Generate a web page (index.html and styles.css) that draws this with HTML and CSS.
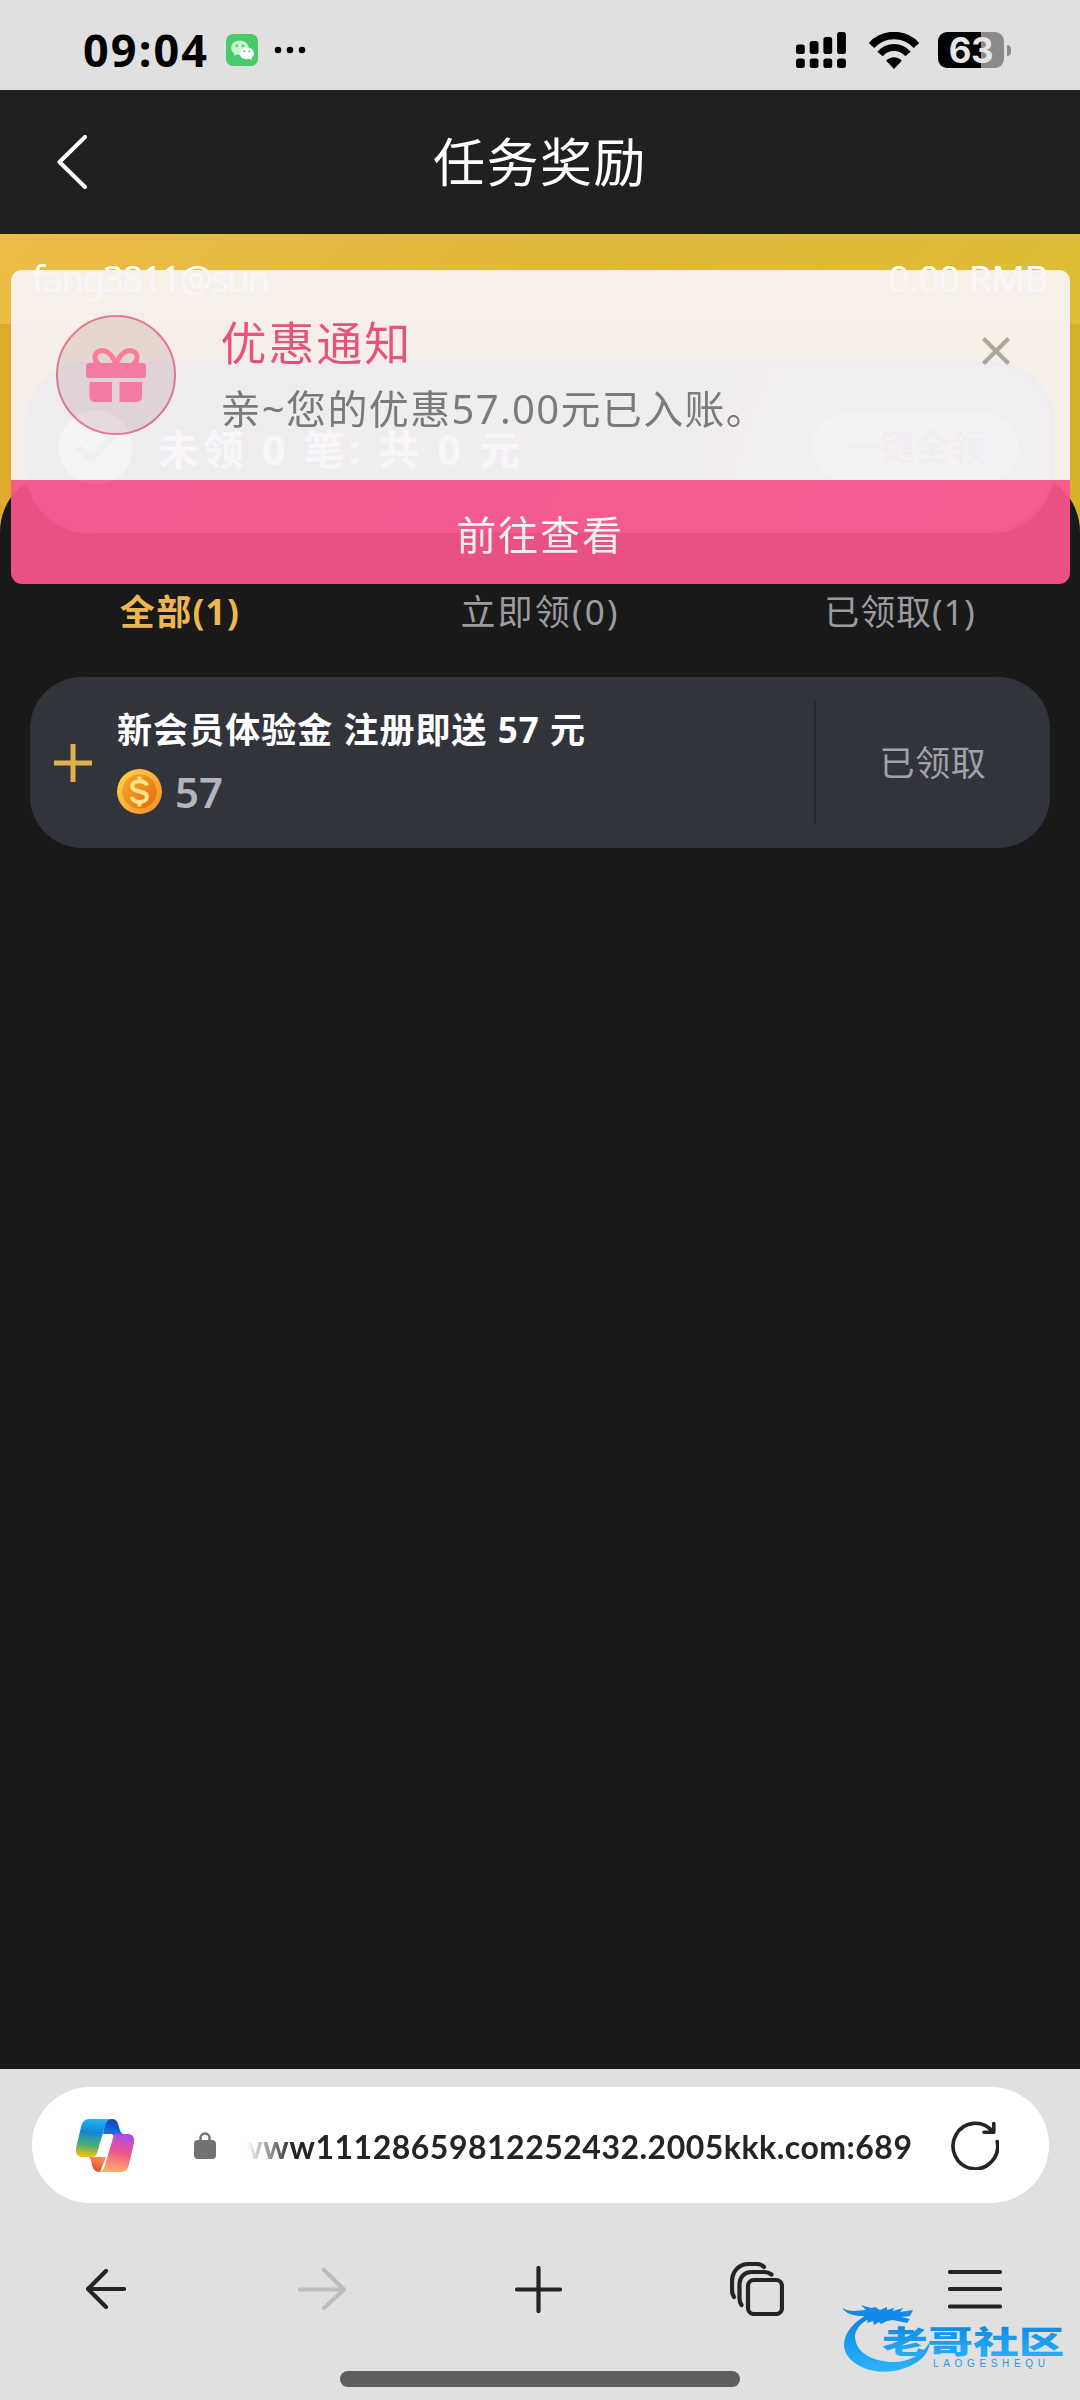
FILE: index.html
```html
<!DOCTYPE html>
<html lang="zh-CN">
<head>
<meta charset="utf-8">
<title>任务奖励</title>
<link rel="stylesheet" href="styles.css">
</head>
<body>
<div class="screen">
  <div class="status">
    <span class="clock">09:04</span>
    <svg class="wechat" width="32" height="32" viewBox="0 0 32 32">
      <rect width="32" height="32" rx="7" fill="#4acb6b"/>
      <path d="M14 6.500c-5 0-8.800 3.200-8.800 7.400 0 2.300 1.200 4.300 3.100 5.600L7.600 22l3.200-1.500c1 .3 2.100.5 3.200.5 4.800 0 8.600-3 8.600-7.100S18.800 6.500 14 6.500z" fill="#c6f5d2"/>
      <circle cx="10.800" cy="11.800" r="1.300" fill="#4acb6b"/><circle cx="17" cy="11.800" r="1.300" fill="#4acb6b"/>
      <path d="M20.800 13.500c-4 0-7.100 2.600-7.100 5.900s3.100 5.800 7.100 5.800c.9 0 1.800-.1 2.600-.4l2.600 1.200-.6-2.100c1.600-1.100 2.500-2.700 2.500-4.500 0-3.300-3.100-5.900-7.100-5.900z" fill="#fff"/>
      <circle cx="18.400" cy="17.300" r="1" fill="#4acb6b"/><circle cx="23.300" cy="17.300" r="1" fill="#4acb6b"/>
    </svg>
    <svg class="dots" width="32" height="8" viewBox="0 0 32 8"><circle cx="4" cy="4" r="3.300"/><circle cx="16" cy="4" r="3.300"/><circle cx="28" cy="4" r="3.300"/></svg>
    <svg class="signal" width="50" height="36" viewBox="0 0 50 36">
      <rect x="0" y="12.500" width="8.800" height="9.500" rx="2.500"/><rect x="13.700" y="9" width="8.800" height="13" rx="2.500"/><rect x="27.400" y="5" width="8.800" height="17" rx="2.500"/><rect x="41.100" y="0" width="8.800" height="22" rx="2.500"/>
      <rect x="0" y="26.500" width="8.800" height="9.500" rx="2.500"/><rect x="13.700" y="26.500" width="8.800" height="9.500" rx="2.500"/><rect x="27.400" y="26.500" width="8.800" height="9.500" rx="2.500"/><rect x="41.100" y="26.500" width="8.800" height="9.500" rx="2.500"/>
    </svg>
    <svg class="wifi" width="50" height="37" viewBox="0 0 50 37">
      <path d="M2.500 13.500C14.500.2 35.500.2 47.500 13.500" fill="none" stroke="#000" stroke-width="7.500"/>
      <path d="M11 22c7.500-8.600 20.500-8.600 28 0" fill="none" stroke="#000" stroke-width="7"/>
      <path d="M25 37l-7.800-8.200c4-4.800 11.600-4.800 15.600 0z"/>
    </svg>
    <div class="battery"><span>63</span></div>
    <i class="nub"></i>
  </div>

  <header class="header">
    <svg width="30" height="54" viewBox="0 0 30 54"><path d="M28 2L2.500 27 28 52" fill="none" stroke="#fff" stroke-width="4" stroke-linecap="round" stroke-linejoin="round"/></svg>
    <h1>任务奖励</h1>
  </header>

  <main class="page">
    <div class="user"><span class="name">fang3811@sun</span><span class="balance">0.00 RMB</span></div>
    <section class="summary">
      <svg width="75" height="75" viewBox="0 0 75 75"><circle cx="37.500" cy="37.500" r="37" fill="#e2dfe4"/><path d="M20 37l13 13 23-24" fill="none" stroke="#a8a5b1" stroke-width="7"/></svg>
      <span class="total">未领 0 笔: 共 0 元</span>
      <span class="claim">一键全领</span>
    </section>
    <section class="panel">
      <nav class="tabs"><span class="active">全部(1)</span><span class="wide">立即领(0)</span><span>已领取(1)</span></nav>
      <article class="task">
        <svg class="plus" width="40" height="40" viewBox="0 0 40 40"><path d="M20 1v38M1 20h38" stroke="#dfb04e" stroke-width="5"/></svg>
        <div class="info">
          <h2>新会员体验金 注册即送 57 元</h2>
          <div class="amount">
            <svg width="45" height="45" viewBox="0 0 45 45">
              <defs><linearGradient id="rim" x1="0" y1="0" x2="1" y2="1"><stop offset="0" stop-color="#ffd84d"/><stop offset="1" stop-color="#f88a25"/></linearGradient>
              <linearGradient id="face" x1="0" y1="0" x2="1" y2=".8"><stop offset="0" stop-color="#f8ab28"/><stop offset="1" stop-color="#e27112"/></linearGradient></defs>
              <circle cx="22.500" cy="22.500" r="22.500" fill="url(#rim)"/><circle cx="22.500" cy="22.500" r="17.200" fill="url(#face)"/>
              <path d="M30 16.500c-1-3.200-4-4.300-7.500-4.300-4.200 0-7.300 1.800-7.300 5 0 6.900 14.700 3.600 14.700 10.500 0 3.300-3.200 5.200-7.400 5.200-4.100 0-7.200-1.700-7.800-5M22.500 7.500v6M22.500 32v5.500" fill="none" stroke="#ffe58a" stroke-width="4"/>
            </svg>
            <span>57</span>
          </div>
        </div>
        <span class="state">已领取</span>
      </article>
    </section>

    <aside class="notice">
      <div class="message">
        <div class="badge">
          <svg width="60" height="54" viewBox="0 0 60 54" fill="#ff7aa5">
            <path d="M30 17C27 7 21 2.500 16 2.500c-4.500 0-7 3-7 7 0 3 1.500 5.500 4 7.500M30 17C33 7 39 2.500 44 2.500c4.500 0 7 3 7 7 0 3-1.500 5.500-4 7.500" fill="none" stroke="#ff7aa5" stroke-width="5"/>
            <rect y="15" width="60" height="15" rx="3"/><path d="M3.500 34H26v20H8.500a5 5 0 0 1-5-5zM33.500 34H56v15a5 5 0 0 1-5 5H33.500z"/>
          </svg>
        </div>
        <div class="copy"><h3>优惠通知</h3><p>亲~您的优惠57.00元已入账。</p></div>
        <svg class="close" width="28" height="28" viewBox="0 0 28 28"><path d="M1.500 1.500l25 25M26.500 1.500l-25 25" stroke="#aaa7a5" stroke-width="4.200"/></svg>
      </div>
      <div class="go">前往查看</div>
    </aside>
  </main>

  <footer class="browser">
    <div class="address">
      <svg class="copilot" width="58" height="53" viewBox="0 0 58 53">
        <defs>
          <linearGradient id="cool" x1=".5" y1="0" x2=".4" y2="1"><stop offset="0" stop-color="#23b4f4"/><stop offset=".35" stop-color="#1686d6"/><stop offset=".7" stop-color="#4cae70"/><stop offset="1" stop-color="#f0c414"/></linearGradient>
          <linearGradient id="warm" x1=".6" y1="0" x2=".4" y2="1"><stop offset="0" stop-color="#a64ce8"/><stop offset=".45" stop-color="#f0538c"/><stop offset="1" stop-color="#ffb366"/></linearGradient>
          <linearGradient id="blue" x1=".7" y1="0" x2=".3" y2="1"><stop offset="0" stop-color="#123fb8"/><stop offset="1" stop-color="#1d72e8"/></linearGradient>
          <linearGradient id="red" x1=".7" y1="0" x2=".3" y2="1"><stop offset="0" stop-color="#ff9350"/><stop offset="1" stop-color="#e0432f"/></linearGradient>
        </defs>
        <path d="M30 0h6c4 0 6 3 7 8 1 4 2 6 4 7H27z" fill="url(#blue)"/>
        <path d="M13 38h17l-6 15c-5 0-7-3-8-7-1-4-1-6-3-8z" fill="url(#red)"/>
        <path d="M13 0h23c-4 0-6 3-7 7l-8 27c-1 3-3 4-6 4H6c-5 0-7-4-6-9L5 8c1-5 4-8 8-8z" fill="url(#cool)"/>
        <path d="M45 53H22c4 0 6-3 7-7l8-27c1-3 0-4-4-4h19c5 0 7 4 6 9l-5 21c-1 5-4 8-8 8z" fill="url(#warm)"/>
        <path d="M36 15h-4c-3 0-4 2-5 5l-5 18h4c4 0 5-2 6-5z" fill="#fff"/>
      </svg>
      <svg class="lock" width="22" height="27" viewBox="0 0 22 27"><rect y="8" width="22" height="19" rx="4" fill="#727272"/><path d="M6.500 9V6a4.500 4.500 0 0 1 9 0v3" fill="none" stroke="#727272" stroke-width="2.500"/></svg>
      <span class="url">www11128659812252432.2005kkk.com:689</span>
      <svg class="reload" width="48" height="50" viewBox="0 0 48 50" fill="none" stroke="#242424" stroke-width="3.600" stroke-linecap="round" stroke-linejoin="round"><path d="M46.200 21.500A22.300 22.800 0 1 1 41.500 11.500M33 12.200h9.800V3.500"/></svg>
    </div>
    <nav class="tools">
      <span><svg width="40" height="40" viewBox="0 0 40 40"><path d="M38 20H2M20 2L2 20l18 18"/></svg></span>
      <span class="off"><svg width="48" height="42" viewBox="0 0 48 42"><path d="M2 21.500h44M26 2l20 19.500L26 40"/></svg></span>
      <span><svg width="47" height="47" viewBox="0 0 47 47"><path d="M2 23.500h43M23.500 2v43"/></svg></span>
      <span class="stack"><svg width="54" height="54" viewBox="0 0 54 54"><rect x="18" y="18" width="34" height="34" rx="6"/><path d="M4 35c-1.500-2-2-4-2-7v-8C2 9 9 2 19 2h8c3 0 5 1 7 3M11.500 43c-1.500-2-2-4-2-7V23c0-8 5-13 12-13h13c3 0 5 1 7 2.500"/></svg></span>
      <span class="menu"><svg width="54" height="40" viewBox="0 0 54 40"><path d="M2 3h50M2 20h50M2 37.500h50"/></svg></span>
    </nav>
    <i class="home"></i>
  </footer>

  <svg class="mark" width="224" height="74" viewBox="0 0 224 74">
    <defs><linearGradient id="sea" x1="0" y1="0" x2="0" y2="1"><stop offset="0" stop-color="#0a80e0"/><stop offset="1" stop-color="#2cb4fa"/></linearGradient></defs>
    <path d="M28 10C6 19-3 38 5 51c9 14 33 21 55 14 17-5 27-15 28-27-7 12-20 20-36 20-21 0-38-9-39-25C13 23 24 14 36 12z" fill="url(#sea)"/>
    <path d="M1 4c8 5 15 2 23 2l-5-5 10 3 4-1 5 3 7-3 0 3 7-2-1 3 10-3-3 4 13-2-3 6-9 1 9 2-3 4-14-3-6 1-6 3-2-2-5 3-1-4-6 2 1-5-7 2 3-4c-9 0-16-1-21-7z" fill="#118be9"/>
    <g fill="url(#sea)"><text class="mark-cn" transform="translate(40 49) scale(1.470 1)">老哥社区</text></g>
    <text class="mark-en" x="91" y="63" textLength="112">LAOGESHEQU</text>
  </svg>
</div>
</body>
</html>
```
FILE: styles.css
```css
* { box-sizing: border-box; }
body { margin: 0; font-family: "Noto Sans", "Noto Sans CJK SC", sans-serif; }
h1, h2, h3, p { margin: 0; font-weight: 400; white-space: nowrap; }
svg { display: block; flex: none; }
span { white-space: nowrap; }

.screen { position: relative; width: 1080px; height: 2400px; display: flex; flex-direction: column; background: #191919; overflow: hidden; }

.status { height: 90px; flex: none; display: flex; align-items: center; padding: 10px 69px 0 83px; background: #e0e0e0; }
.clock { width: 127px; margin-right: 16px; font-size: 45px; font-weight: 700; line-height: 60px; letter-spacing: 2.100px; }
.dots { margin-left: 16px; }
.signal { margin-left: auto; }
.wifi { margin: 0 19.500px 0 22.500px; }
.battery { width: 66px; height: 36px; border-radius: 9px; background: linear-gradient(90deg, #000 43px, #8a8a8a 43px); color: #e6e6e6; font: 700 35px/37px Inter, sans-serif; text-align: center; letter-spacing: -0.500px; }
.nub { width: 4px; height: 11px; margin-left: 3px; border-radius: 0 4px 4px 0; background: #8a8a8a; }

.header { height: 144px; flex: none; display: grid; grid-template-columns: 100px 1fr 100px; align-items: center; padding: 0 0 0 57px; background: #202020; }
.header h1 { margin-left: -57px; text-align: center; color: #fff; font-size: 52px; line-height: 60px; letter-spacing: 1.500px; }

.page { position: relative; flex: 1; display: flex; flex-direction: column; background: linear-gradient(90deg, #dfab2c, #d3b229) 0 0 / 100% 370px no-repeat; }
.user { height: 90px; display: flex; justify-content: space-between; padding: 18px 32px 0; background: linear-gradient(135deg, #edbd46, #e0b83a 50%, #dfbd34); color: #fff; font-size: 37px; line-height: 52px; }
.user .name { letter-spacing: -2px; }
.user .balance { letter-spacing: -0.500px; }
.summary { height: 172px; margin: 37px 25px 0; padding: 0 33px 0 29px; border: 4px solid #868387; border-radius: 65px; display: flex; align-items: center; background: linear-gradient(110deg, #85838f, #aba7b1); z-index: 1; }
.total { margin-left: 25px; color: #fff; font-size: 41px; font-weight: 700; letter-spacing: 3.800px; }
.claim { margin-left: auto; width: 206px; height: 68px; border-radius: 34px; background: #c8c4ca; color: #97929a; font-size: 35px; font-weight: 700; line-height: 68px; text-align: center; }
.panel { flex: 1; margin-top: -61px; padding: 117px 30px 0; border-radius: 60px 60px 0 0; background: #191919; }

.tabs { display: grid; grid-template-columns: repeat(3, 1fr); margin: 0 -30px; color: #9b9ba0; font-size: 35px; line-height: 46px; text-align: center; letter-spacing: .900px; }
.tabs .active { color: #ecb84e; font-weight: 700; letter-spacing: 1.300px; }
.tabs .wide { letter-spacing: 2.200px; }
.task { height: 171px; margin-top: 42px; padding: 0 0 0 23px; display: flex; align-items: center; border-radius: 52px; background: #32343c; }
.info { flex: 1; margin-left: 24px; }
.task h2 { margin-top: 2px; color: #fff; font-size: 35px; font-weight: 700; line-height: 48px; letter-spacing: 1.050px; }
.amount { display: flex; align-items: center; gap: 13px; height: 60px; margin-top: 7px; color: #b3b3bd; font-size: 42px; font-weight: 600; }
.state { width: 236px; height: 123px; border-left: 2px solid #272930; color: #a0a1a9; font-size: 35px; line-height: 123px; text-align: center; letter-spacing: .700px; }

.notice { position: absolute; z-index: 2; left: 10.500px; top: 36px; width: 1059px; height: 314px; border-radius: 11px; overflow: hidden; opacity: .92; }
.message { height: 210px; display: flex; align-items: flex-start; padding: 45px 60px 0 45px; background: #f8f5f8; }
.badge { width: 120px; height: 120px; border: 2px solid #e8749b; border-radius: 50%; background: #e7dade; display: flex; align-items: center; justify-content: center; }
.copy { margin-left: 45px; flex: 1; }
.copy h3 { color: #ea4c81; font-size: 46px; line-height: 60px; margin-top: -3px; letter-spacing: 1.900px; }
.copy p { margin-top: 10px; color: #7a7879; font-size: 40px; line-height: 54px; letter-spacing: 1.350px; }
.close { margin-top: 22px; }
.go { height: 104px; background: #fb5690; color: #fff; font-size: 40px; line-height: 110px; text-align: center; letter-spacing: 1.900px; }

.browser { height: 331px; flex: none; display: flex; flex-direction: column; align-items: center; padding-top: 18px; background: #e0e0e0; }
.address { width: 1017px; height: 116px; border-radius: 58px; background: #fff; display: flex; align-items: center; padding: 0 50px 0 44px; }
.lock { margin-left: 60px; }
.url { width: 666px; margin: 3px 0 0 31px; display: flex; justify-content: flex-end; overflow: hidden; color: #242424; font: 700 32px/44px Lato, sans-serif; letter-spacing: .500px; -webkit-mask-image: linear-gradient(90deg, transparent, #000 46px); mask-image: linear-gradient(90deg, transparent, #000 46px); }
.reload { margin-left: auto; }
.tools { width: 1080px; height: 172px; margin-left: -4px; display: grid; grid-template-columns: repeat(5, 216px); place-items: center; }
.tools svg { fill: none; stroke: #242424; stroke-width: 4.200; stroke-linecap: round; stroke-linejoin: round; }
.tools .off svg { stroke: #bdbdbd; }
.tools .stack { padding-left: 6px; }
.tools .menu { padding-left: 9px; }
.home { width: 400px; height: 16px; margin-top: -4px; border-radius: 8px; background: #5e5e5e; }

.mark { position: absolute; left: 842px; top: 2304px; }
.mark-cn { font: 900 31px "Noto Sans CJK SC", sans-serif; }
.mark-en { fill: #2b98e8; font: 10px "Liberation Sans", sans-serif; }
```
